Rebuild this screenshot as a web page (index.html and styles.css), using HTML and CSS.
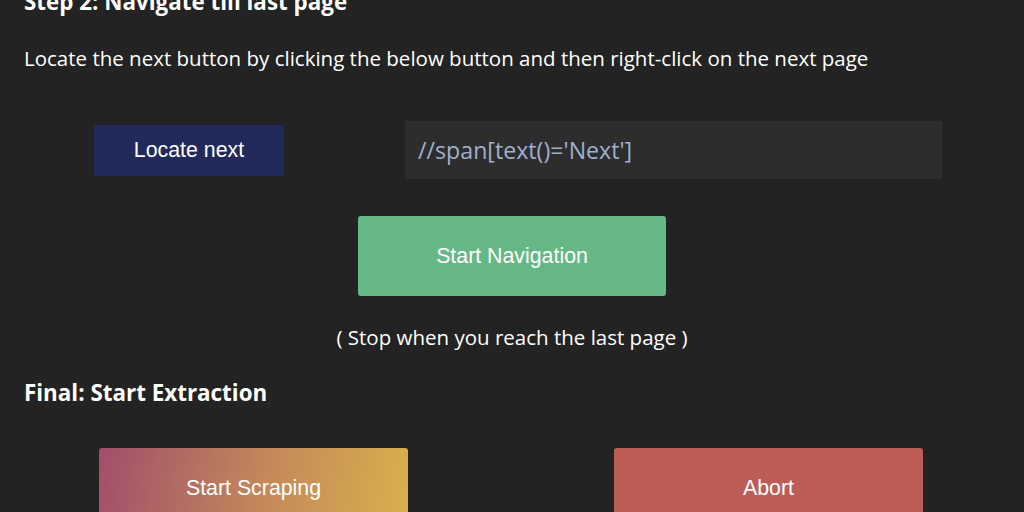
FILE: index.html
```html
<!DOCTYPE html>
<html>
<head>
<meta charset="utf-8">
<link rel="stylesheet" href="styles.css">
</head>
<body>
<main class="page">
  <h2 class="step-title">Step 2: Navigate till last page</h2>
  <p class="desc">Locate the next button by clicking the below button and then right-click on the next page</p>
  <div class="locate-row">
    <button class="btn btn-locate">Locate next</button>
    <div class="xpath">//span[text()='Next']</div>
  </div>
  <div class="nav-row">
    <button class="btn btn-nav">Start Navigation</button>
  </div>
  <p class="hint">( Stop when you reach the last page )</p>
  <h2 class="step-title final">Final: Start Extraction</h2>
  <div class="action-row">
    <button class="btn btn-scrape">Start Scraping</button>
    <button class="btn btn-abort">Abort</button>
  </div>
</main>
</body>
</html>
```
FILE: styles.css
```css
html, body {
  margin: 0;
  padding: 0;
  background: #232323;
  overflow: hidden;
}
.page {
  width: 1024px;
  height: 512px;
  padding: 0 24px;
  box-sizing: border-box;
  font-family: "Open Sans", "Noto Sans", sans-serif;
  color: #ffffff;
  overflow: hidden;
}
.step-title {
  margin: -13px 0 0 0;
  font-size: 22.4px;
  font-weight: 700;
  line-height: 30px;
}
.desc {
  margin: 26px 0 0 0;
  font-size: 20.5px;
  line-height: 30px;
}
.locate-row {
  display: flex;
  align-items: center;
  margin-top: 48px;
  padding-left: 70px;
  gap: 121px;
}
.btn {
  border: none;
  color: #ffffff;
  font-family: "Liberation Sans", Arial, sans-serif;
  font-size: 21.33px;
  border-radius: 3px;
  padding: 0;
  flex-shrink: 0;
}
.btn-locate {
  width: 190px;
  height: 51px;
  background: #212a5b;
}
.xpath {
  width: 537px;
  height: 58px;
  box-sizing: border-box;
  background: #2d2d2d;
  color: #9fb0cf;
  font-size: 23.2px;
  line-height: 58px;
  padding-left: 13px;
}
.nav-row {
  display: flex;
  justify-content: center;
  margin-top: 37px;
}
.btn-nav {
  width: 308px;
  height: 80px;
  background: #65b885;
}
.hint {
  text-align: center;
  margin: 25px 0 0 0;
  font-size: 20.5px;
  line-height: 32px;
}
.final {
  margin-top: 25px;
}
.action-row {
  display: flex;
  justify-content: space-between;
  margin-top: 40px;
  padding: 0 77px 0 75px;
}
.btn-scrape, .btn-abort {
  width: 309px;
  height: 80px;
}
.btn-scrape {
  background: linear-gradient(100deg, #a24e6b 0%, #c48a5a 55%, #d8b14c 100%);
}
.btn-abort {
  background: #bc5e56;
}
```
